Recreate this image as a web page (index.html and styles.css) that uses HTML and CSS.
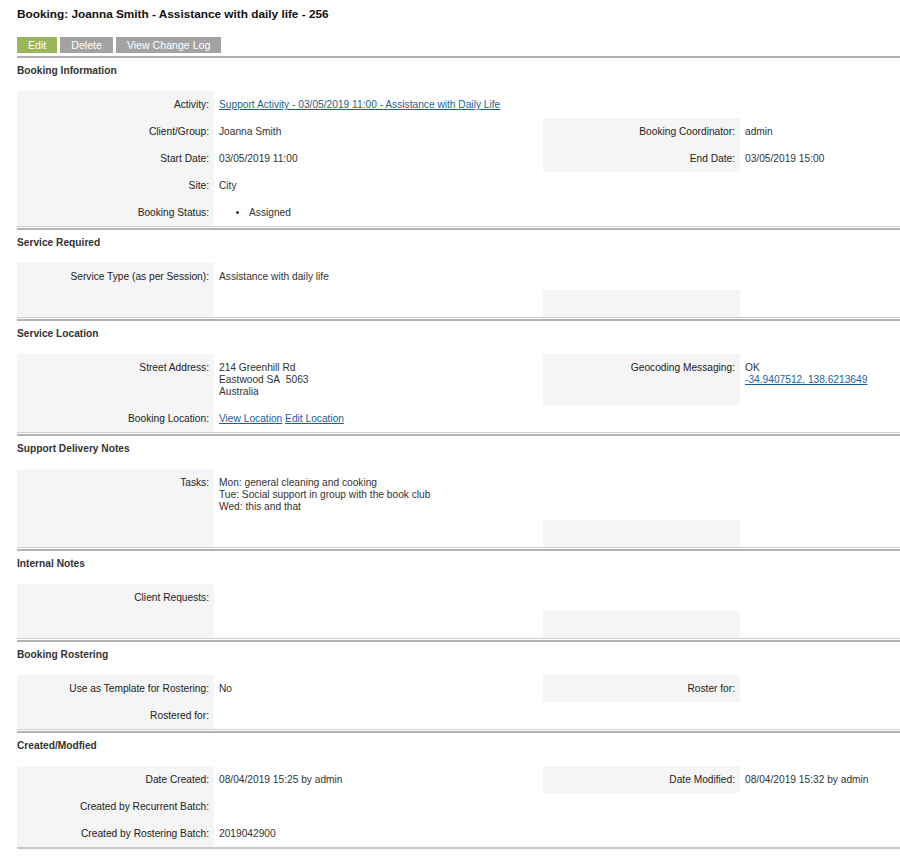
FILE: index.html
```html
<!DOCTYPE html>
<html>
<head>
<meta charset="utf-8">
<title>Booking</title>
<link rel="stylesheet" href="styles.css">
</head>
<body>
<div class="page">
  <h1 class="title">Booking: Joanna Smith - Assistance with daily life - 256</h1>
  <div class="actions">
    <a class="btn btn-green">Edit</a>
    <a class="btn">Delete</a>
    <a class="btn">View Change Log</a>
  </div>

  <h2 class="sec-head">Booking Information</h2>
  <div class="grid">
    <div class="lbl">Activity:</div><div class="val span3"><a class="lnk">Support Activity - 03/05/2019 11:00 - Assistance with Daily Life</a></div>
    <div class="lbl">Client/Group:</div><div class="val">Joanna Smith</div><div class="lbl">Booking Coordinator:</div><div class="val">admin</div>
    <div class="lbl">Start Date:</div><div class="val">03/05/2019 11:00</div><div class="lbl">End Date:</div><div class="val">03/05/2019 15:00</div>
    <div class="lbl">Site:</div><div class="val">City</div><div></div><div></div>
    <div class="lbl">Booking Status:</div><div class="val"><ul class="status"><li>Assigned</li></ul></div><div></div><div></div>
  </div>
  <div class="divider"></div>

  <h2 class="sec-head">Service Required</h2>
  <div class="grid">
    <div class="lbl">Service Type (as per Session):</div><div class="val">Assistance with daily life</div><div></div><div></div>
    <div class="lbl"></div><div class="val"></div><div class="lbl"></div><div class="val"></div>
  </div>
  <div class="divider"></div>

  <h2 class="sec-head">Service Location</h2>
  <div class="grid">
    <div class="lbl">Street Address:</div><div class="val">214 Greenhill Rd<br>Eastwood SA&nbsp; 5063<br>Australia</div><div class="lbl">Geocoding Messaging:</div><div class="val">OK<br><a class="lnk">-34.9407512, 138.6213649</a></div>
    <div class="lbl">Booking Location:</div><div class="val"><a class="lnk">View Location</a> <a class="lnk">Edit Location</a></div><div></div><div></div>
  </div>
  <div class="divider"></div>

  <h2 class="sec-head">Support Delivery Notes</h2>
  <div class="grid">
    <div class="lbl">Tasks:</div><div class="val">Mon: general cleaning and cooking<br>Tue: Social support in group with the book club<br>Wed: this and that</div><div></div><div></div>
    <div class="lbl"></div><div class="val"></div><div class="lbl"></div><div class="val"></div>
  </div>
  <div class="divider"></div>

  <h2 class="sec-head">Internal Notes</h2>
  <div class="grid">
    <div class="lbl">Client Requests:</div><div class="val"></div><div></div><div></div>
    <div class="lbl"></div><div class="val"></div><div class="lbl"></div><div class="val"></div>
  </div>
  <div class="divider"></div>

  <h2 class="sec-head">Booking Rostering</h2>
  <div class="grid">
    <div class="lbl">Use as Template for Rostering:</div><div class="val">No</div><div class="lbl">Roster for:</div><div class="val"></div>
    <div class="lbl">Rostered for:</div><div class="val"></div><div></div><div></div>
  </div>
  <div class="divider"></div>

  <h2 class="sec-head">Created/Modfied</h2>
  <div class="grid">
    <div class="lbl">Date Created:</div><div class="val">08/04/2019 15:25 by admin</div><div class="lbl">Date Modified:</div><div class="val">08/04/2019 15:32 by admin</div>
    <div class="lbl">Created by Recurrent Batch:</div><div class="val"></div><div></div><div></div>
    <div class="lbl">Created by Rostering Batch:</div><div class="val">2019042900</div><div></div><div></div>
  </div>
  <div class="divider-last"></div>
</div>
</body>
</html>
```

FILE: styles.css
```css
html, body {
  margin: 0;
  padding: 0;
  background: #ffffff;
}

body {
  font-family: "Liberation Sans", Arial, Helvetica, sans-serif;
  font-size: 10.2px;
  color: #333333;
}

.page {
  width: 883px;
  padding-left: 17px;
}

.title {
  margin: 0;
  padding-top: 7px;
  font-size: 11.8px;
  line-height: 15px;
  font-weight: bold;
  color: #111111;
}

.actions {
  display: flex;
  gap: 3px;
  margin-top: 15px;
  padding-bottom: 3px;
  border-bottom: 2px solid #b0b0b0;
}

.btn {
  display: block;
  height: 16px;
  line-height: 16px;
  padding: 0 11px;
  background: #a3a3a3;
  color: #ffffff;
  font-size: 10.6px;
  text-decoration: none;
}

.btn-green {
  background: #9bb55c;
}

.sec-head {
  margin: 0;
  padding: 6px 0 14px;
  font-size: 10.2px;
  line-height: 13px;
  font-weight: bold;
  color: #333333;
}

.grid {
  display: grid;
  grid-template-columns: 197px 329px 197px 1fr;
}

.lbl,
.val {
  padding: 8px 5px 7px;
  line-height: 12px;
  min-height: 12px;
}

.lbl {
  background: #f5f5f5;
  text-align: right;
  color: #222222;
}

.val {
  color: #333333;
}

.span3 {
  grid-column: span 3;
}

.lnk {
  color: #1d5e9a;
  text-decoration: underline;
}

.status {
  margin: 0;
  padding-left: 30px;
}

.divider {
  height: 1px;
  border-top: 1px solid #cfcfcf;
  border-bottom: 2px solid #b2b2b2;
}

.divider-last {
  height: 0;
  border-top: 2px solid #c8c8c8;
}
```
